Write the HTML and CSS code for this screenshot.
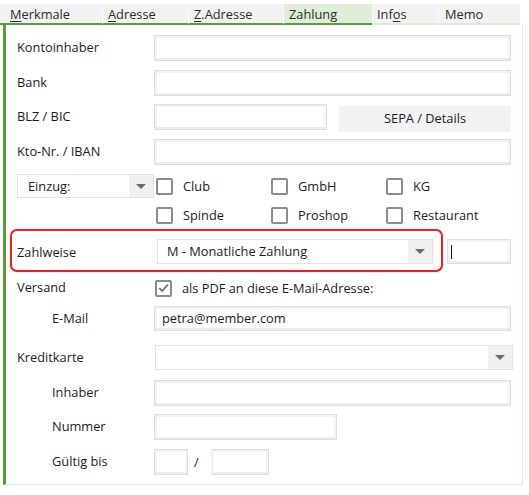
FILE: index.html
```html
<!DOCTYPE html>
<html lang="de">
<head>
<meta charset="utf-8">
<title>Zahlung</title>
<link rel="stylesheet" href="styles.css">
</head>
<body>
<div class="tabs">
  <div class="tab done w1"><u>M</u>erkmale</div>
  <div class="tab done w2"><u>A</u>dresse</div>
  <div class="tab done w3"><u>Z</u>.Adresse</div>
  <div class="tab done active w4">Zahlung</div>
  <div class="tab w5">Inf<u>o</u>s</div>
  <div class="tab w6">Memo</div>
</div>
<div class="panel">
  <div class="row r1"><div class="lbl">Kontoinhaber</div><div class="field wfull"></div></div>
  <div class="row r2"><div class="lbl">Bank</div><div class="field wfull"></div></div>
  <div class="row r3"><div class="lbl">BLZ / BIC</div><div class="field wbic"></div><div class="btn">SEPA / Details</div></div>
  <div class="row r4"><div class="lbl">Kto-Nr. / IBAN</div><div class="field wfull"></div></div>
  <div class="row r5">
    <div class="select einzug"><span class="seltext">Einzug:</span><span class="arrow"><span class="tri"></span></span></div>
    <div class="cb c1"><span class="box"></span>Club</div>
    <div class="cb c2"><span class="box"></span>GmbH</div>
    <div class="cb"><span class="box"></span>KG</div>
  </div>
  <div class="row r6">
    <div class="spacer"></div>
    <div class="cb c1"><span class="box"></span>Spinde</div>
    <div class="cb c2"><span class="box"></span>Proshop</div>
    <div class="cb"><span class="box"></span>Restaurant</div>
  </div>
  <div class="row r7">
    <div class="highlight">
      <div class="lbl hl">Zahlweise</div>
      <div class="select zahl"><span class="seltext">M - Monatliche Zahlung</span><span class="arrow"><span class="tri"></span></span></div>
    </div>
    <div class="field small"><span class="caret"></span></div>
  </div>
  <div class="row r8"><div class="lbl">Versand</div>
    <div class="cb"><span class="box checked"><svg width="14" height="14" viewBox="0 0 14 14"><path d="M2.5 7.2 L5.6 10.2 L11.6 3.4" fill="none" stroke="#707070" stroke-width="1.8"/></svg></span>als PDF an diese E-Mail-Adresse:</div>
  </div>
  <div class="row r9"><div class="lbl ind">E-Mail</div><div class="field wfull mail">petra@member.com</div></div>
  <div class="row r10"><div class="lbl">Kreditkarte</div><div class="select kk"><span class="seltext"></span><span class="arrow"><span class="tri"></span></span></div></div>
  <div class="row r11"><div class="lbl ind">Inhaber</div><div class="field wfull"></div></div>
  <div class="row r12"><div class="lbl ind">Nummer</div><div class="field wnum"></div></div>
  <div class="row r13"><div class="lbl ind">Gültig bis</div><div class="field wmon"></div><span class="slash">/</span><div class="field wyear"></div></div>
</div>
</body>
</html>
```
FILE: styles.css
```css
html, body {
  margin: 0;
  padding: 0;
  background: #ffffff;
}
body {
  font-family: "Open Sans", "Noto Sans", sans-serif;
  font-size: 12.8px;
  color: #1c1c1c;
  width: 529px;
  height: 495px;
  overflow: hidden;
}
.tabs {
  display: flex;
  margin-top: 4px;
  height: 21px;
}
.tab {
  box-sizing: border-box;
  height: 21px;
  line-height: 20px;
  padding-left: 8px;
  background: #f2f2f2;
  border-left: 1px solid #fbfbfb;
  border-bottom: 2px solid #dcecd4;
  color: #2a2a2a;
}
.tab u { text-decoration: underline; text-underline-offset: 2px; }
.tab.done { border-bottom-color: #5a9e3a; }
.tab.active { background: #e0eed9; }
.w1 { width: 102px; border-left: none; padding-left: 10px; }
.w2 { width: 86px; padding-left: 5px; }
.w3 { width: 95px; padding-left: 5px; }
.w4 { width: 89px; padding-left: 5px; }
.w5 { width: 66px; padding-left: 4px; }
.w6 { width: 82px; padding-left: 6px; }

.panel {
  box-sizing: border-box;
  margin-left: 3px;
  width: 520px;
  border-left: 3px solid #5a9e3a;
  border-right: 1px solid #dcecd4;
  border-bottom: 1px solid #dcecd4;
  padding: 10px 0 9px 11px;
}
.row {
  display: flex;
  align-items: center;
  height: 26px;
}
.r2 { margin-top: 9px; }
.r3 { margin-top: 8px; }
.r4 { margin-top: 9px; }
.r5 { margin-top: 9px; height: 24px; }
.r6 { margin-top: 5px; height: 24px; }
.r7 { margin-top: 2px; height: 43px; }
.r8 { margin-top: 4px; height: 24px; }
.r9 { margin-top: 6px; height: 25px; }
.r10 { margin-top: 14px; height: 25px; }
.r11 { margin-top: 10px; }
.r12 { margin-top: 8px; }
.r13 { margin-top: 9px; }

.lbl {
  flex: none;
  width: 137px;
  box-sizing: border-box;
  margin-top: -2px;
}
.lbl.ind { padding-left: 35px; }
.field {
  box-sizing: border-box;
  height: 100%;
  border: 1px solid #dddddd;
  box-shadow: inset 0 2px 0 #f2f2f2, inset 0 -2px 0 #ededed, inset 2px 0 0 #f4f4f4, inset -2px 0 0 #f4f4f4;
  background: #ffffff;
}
.wfull { width: 357px; }
.wbic { width: 173px; }
.wnum { width: 183px; }
.wmon { width: 34px; }
.wyear { width: 58px; border-left-color: #f0f0f0; }
.mail {
  padding-left: 7px;
  line-height: 22px;
  color: #1c1c1c;
}
.btn {
  margin-left: 12px;
  width: 172px;
  height: 26px;
  margin-top: 4px;
  background: #f2f2f2;
  text-align: center;
  line-height: 24px;
  color: #1c1c1c;
}
.select {
  box-sizing: border-box;
  display: flex;
  border: 1px solid #e2e2e2;
  background: #ffffff;
  height: 100%;
}
.seltext {
  flex: 1;
  line-height: 22px;
}
.arrow {
  flex: none;
  width: 24px;
  background: #f0f0f0;
  display: flex;
  align-items: center;
  justify-content: center;
}
.tri {
  width: 0;
  height: 0;
  border-left: 5px solid transparent;
  border-right: 5px solid transparent;
  border-top: 5px solid #6a6a6a;
}
.einzug {
  width: 137px;
  height: 24px;
}
.einzug .seltext { padding-left: 10px; }
.spacer { width: 137px; flex: none; }
.cb {
  display: flex;
  align-items: center;
  flex: none;
  margin-left: 2px;
}
.c1, .c2 { width: 113px; }
.box {
  box-sizing: border-box;
  width: 17px;
  height: 17px;
  border: 2px solid #8c8c8c;
  border-radius: 2px;
  margin-right: 10px;
  display: flex;
  align-items: center;
  justify-content: center;
  background: #fff;
}
.box.checked svg { display: block; }
.r8 .cb { margin-left: 1px; }

.highlight {
  box-sizing: border-box;
  display: flex;
  align-items: center;
  margin-left: -7px;
  height: 43px;
  width: 433px;
  padding: 8px 8px 6px 5px;
  border: 2px solid #e3232b;
  border-radius: 7px;
  box-shadow: 0 0 2px rgba(230, 30, 40, 0.35);
}
.lbl.hl { width: 140px; margin-top: 0; }
.zahl {
  width: 278px;
  height: 25px;
}
.zahl .seltext { padding-left: 9px; }
.small {
  width: 64px;
  height: 25px;
  margin-left: 4px;
  margin-top: 2px;
  position: relative;
}
.caret {
  position: absolute;
  left: 3px;
  top: 5px;
  width: 1px;
  height: 14px;
  background: #111;
}
.kk {
  width: 358px;
  margin-left: 1px;
}
.slash {
  margin-left: 6px;
  margin-right: 12px;
}
```
